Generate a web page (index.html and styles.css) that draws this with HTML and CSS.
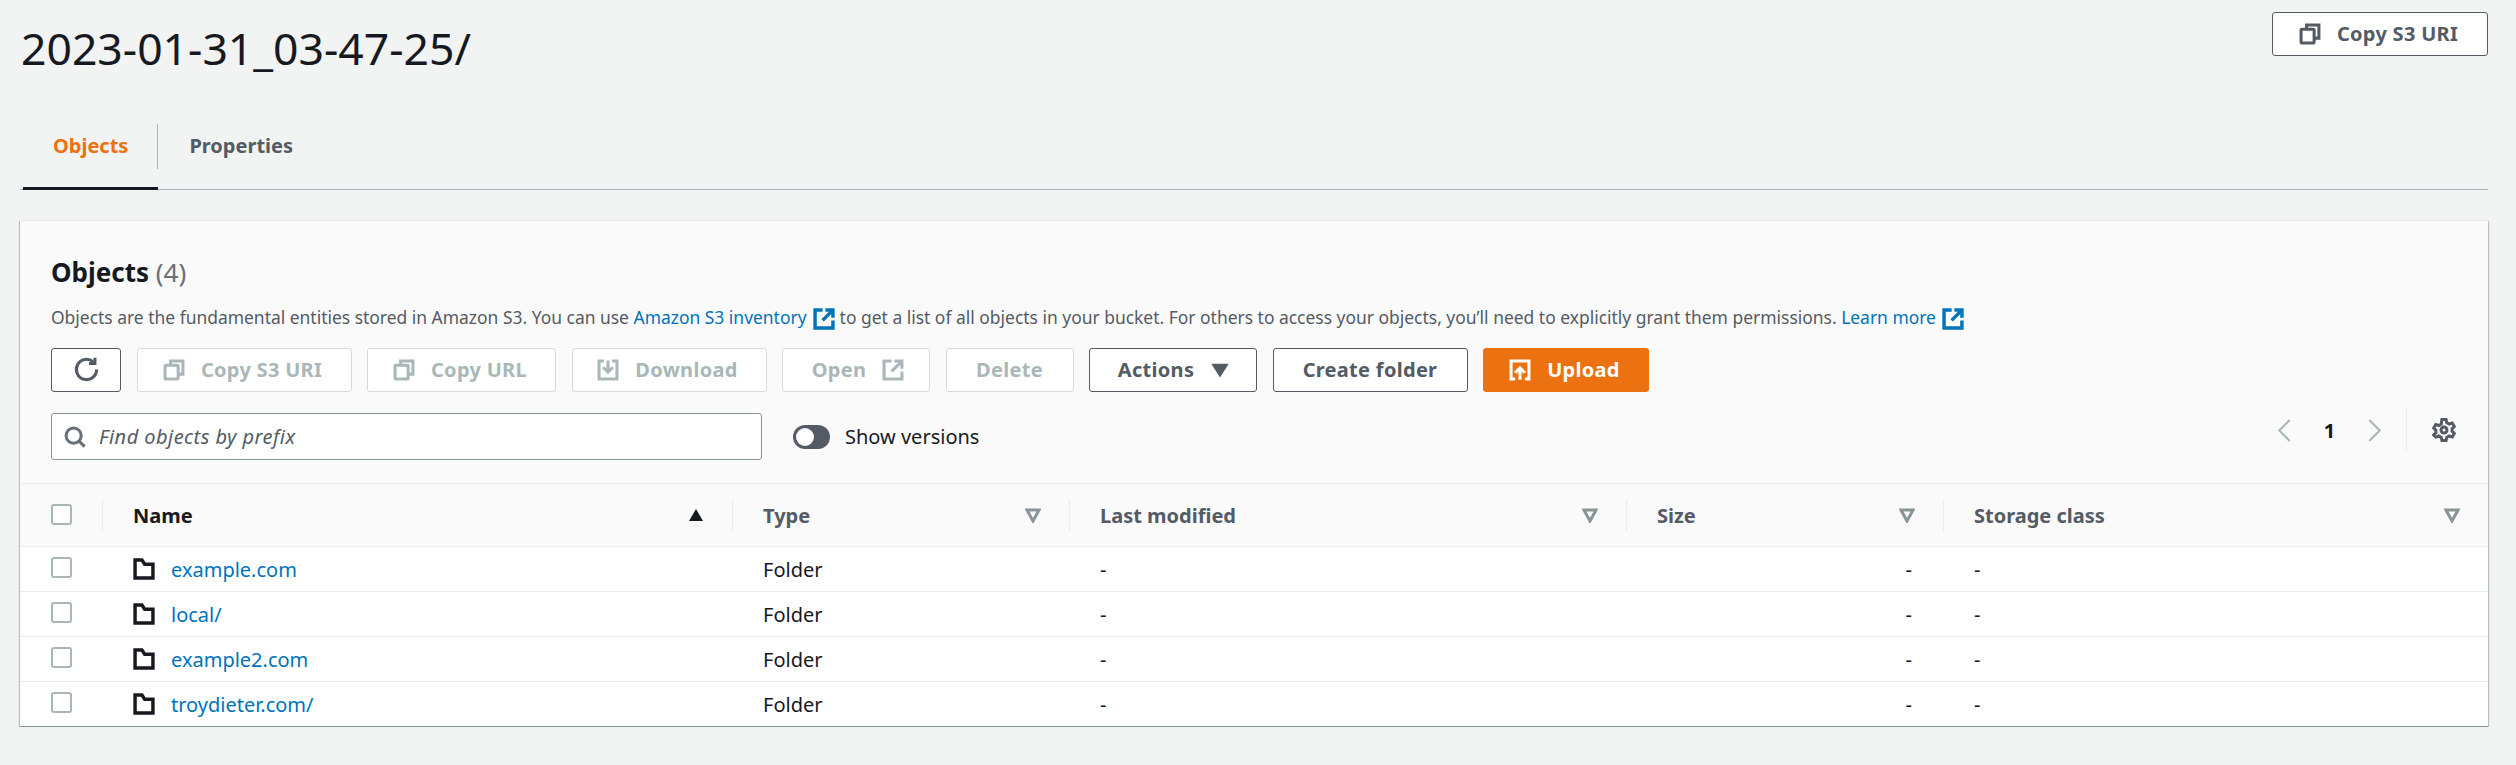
FILE: index.html
```html
<!DOCTYPE html>
<html lang="en">
<head>
    <meta charset="UTF-8">
    <title>2023-01-31_03-47-25/</title>
    <link rel="stylesheet" href="styles.css">
</head>
<body>
    <div class="page">
        <!-- Page title -->
        <div class="page-head">
            <h1>2023-01-31_03-47-25/</h1>
            <button class="btn btn-copy-top">
                <svg class="icon" viewBox="0 0 16 16"><path d="M5.500 4V1.500h9V11H11.500"/><rect x="1.500" y="4.500" width="9.500" height="10" rx=".5"/></svg>
                Copy S3 URI
            </button>
        </div>

        <!-- Tabs -->
        <div class="tabs">
            <div class="tab active"><span class="tab-label">Objects</span></div>
            <div class="tab"><span class="tab-label last">Properties</span></div>
        </div>

        <div class="panel">
            <div class="panel-head">
                <h2>Objects <span class="count">(4)</span></h2>
                <p class="desc">Objects are the fundamental entities stored in Amazon S3. You can use <a href="#">Amazon S3 inventory <svg class="ext" viewBox="0 0 16 16"><path d="M7 1.500H1.500v13h13V9"/><path d="M9 1.500h5.500V7M14.500 1.500L7 9"/></svg></a> to get a list of all objects in your bucket. For others to access your objects, you’ll need to explicitly grant them permissions. <a href="#">Learn more <svg class="ext" viewBox="0 0 16 16"><path d="M7 1.500H1.500v13h13V9"/><path d="M9 1.500h5.500V7M14.500 1.500L7 9"/></svg></a></p>

                <div class="toolbar">
                    <button class="btn btn-refresh">
                        <svg class="icon icon-refresh" viewBox="0 0 16 16"><path d="M14 8a6 6 0 1 1-2-4.500"/><path d="M13 1v3.500H9.500"/></svg>
                    </button>
                    <button class="btn disabled w-uri">
                        <svg class="icon" viewBox="0 0 16 16"><path d="M5.500 4V1.500h9V11H11.500"/><rect x="1.500" y="4.500" width="9.500" height="10" rx=".5"/></svg>
                        Copy S3 URI
                    </button>
                    <button class="btn disabled w-url">
                        <svg class="icon" viewBox="0 0 16 16"><path d="M5.500 4V1.500h9V11H11.500"/><rect x="1.500" y="4.500" width="9.500" height="10" rx=".5"/></svg>
                        Copy URL
                    </button>
                    <button class="btn disabled w-download">
                        <svg class="icon" viewBox="0 0 16 16"><path d="M5 1.500H1.500v13h13v-13H11"/><path d="M8 1v8.500M4.500 6L8 9.500 11.500 6"/></svg>
                        Download
                    </button>
                    <button class="btn disabled w-open">
                        Open
                        <svg class="icon" viewBox="0 0 16 16"><path d="M7 1.500H1.500v13h13V9"/><path d="M9 1.500h5.500V7M14.500 1.500L7 9"/></svg>
                    </button>
                    <button class="btn disabled w-delete">Delete</button>
                    <button class="btn w-actions">
                        Actions
                        <svg class="icon-caret" viewBox="0 0 16 16"><path d="M1 3h14L8 14z"/></svg>
                    </button>
                    <button class="btn w-create">Create folder</button>
                    <button class="btn primary w-upload">
                        <svg class="icon" viewBox="0 0 16 16"><path d="M4.500 14.500h-3v-13h13v13h-3"/><path d="M8 15V6.500M4.500 10L8 6.500l3.500 3.500"/></svg>
                        Upload
                    </button>
                </div>

                <div class="search-row">
                    <div class="search">
                        <svg class="icon search-icon" viewBox="0 0 16 16"><circle cx="7" cy="7" r="5.500"/><path d="M11 11l4 4"/></svg>
                        <span class="placeholder">Find objects by prefix</span>
                    </div>
                    <div class="toggle"><span class="knob"></span></div>
                    <span class="toggle-label">Show versions</span>

                    <div class="pagination">
                        <svg class="chevron" viewBox="0 0 14 22"><path d="M12 1L2 11l10 10"/></svg>
                        <span class="page-num">1</span>
                        <svg class="chevron" viewBox="0 0 14 22"><path d="M2 1l10 10L2 21"/></svg>
                        <span class="pag-divider"></span>
                        <svg class="icon gear" viewBox="0 0 16 16"><circle cx="8" cy="8" r="2"/><path d="M6.600 1h2.800l.4 2 1.700 1 2-.7 1.400 2.400-1.500 1.400v1.800l1.500 1.400-1.400 2.400-2-.7-1.700 1-.4 2H6.600l-.4-2-1.700-1-2 .7L1.100 11.300l1.500-1.400V8.100L1.100 6.700l1.400-2.400 2 .7 1.700-1z"/></svg>
                    </div>
                </div>
            </div>

            <table class="objects">
                <colgroup>
                    <col class="col-check">
                    <col class="col-name">
                    <col class="col-type">
                    <col class="col-modified">
                    <col class="col-size">
                    <col class="col-class">
                </colgroup>
                <thead>
                    <tr>
                        <th class="check-head"><span class="checkbox"></span></th>
                        <th><div class="th-inner sorted">Name <svg class="sort" viewBox="0 0 16 16"><path d="M8 2l7 12H1z"/></svg></div></th>
                        <th><div class="th-inner">Type <svg class="filter" viewBox="0 0 16 16"><path d="M2 3h12L8 14z"/></svg></div></th>
                        <th><div class="th-inner">Last modified <svg class="filter" viewBox="0 0 16 16"><path d="M2 3h12L8 14z"/></svg></div></th>
                        <th><div class="th-inner">Size <svg class="filter" viewBox="0 0 16 16"><path d="M2 3h12L8 14z"/></svg></div></th>
                        <th><div class="th-inner">Storage class <svg class="filter" viewBox="0 0 16 16"><path d="M2 3h12L8 14z"/></svg></div></th>
                    </tr>
                </thead>
                <tbody>
                    <tr>
                        <td class="check-cell"><span class="checkbox"></span></td>
                        <td><div class="name-cell"><svg class="folder" viewBox="0 0 16 16"><path d="M1.500 14.500v-13h5l2 3h6v10z"/></svg><a href="#">example.com</a></div></td>
                        <td>Folder</td>
                        <td>-</td>
                        <td class="size-cell">-</td>
                        <td>-</td>
                    </tr>
                    <tr>
                        <td class="check-cell"><span class="checkbox"></span></td>
                        <td><div class="name-cell"><svg class="folder" viewBox="0 0 16 16"><path d="M1.500 14.500v-13h5l2 3h6v10z"/></svg><a href="#">local/</a></div></td>
                        <td>Folder</td>
                        <td>-</td>
                        <td class="size-cell">-</td>
                        <td>-</td>
                    </tr>
                    <tr>
                        <td class="check-cell"><span class="checkbox"></span></td>
                        <td><div class="name-cell"><svg class="folder" viewBox="0 0 16 16"><path d="M1.500 14.500v-13h5l2 3h6v10z"/></svg><a href="#">example2.com</a></div></td>
                        <td>Folder</td>
                        <td>-</td>
                        <td class="size-cell">-</td>
                        <td>-</td>
                    </tr>
                    <tr>
                        <td class="check-cell"><span class="checkbox"></span></td>
                        <td><div class="name-cell"><svg class="folder" viewBox="0 0 16 16"><path d="M1.500 14.500v-13h5l2 3h6v10z"/></svg><a href="#">troydieter.com/</a></div></td>
                        <td>Folder</td>
                        <td>-</td>
                        <td class="size-cell">-</td>
                        <td>-</td>
                    </tr>
                </tbody>
            </table>
        </div>
    </div>
</body>
</html>
```

FILE: styles.css
```css
body {
    margin: 0;
    background-color: #f2f3f3;
    color: #16191f;
    font-family: "Noto Sans", sans-serif;
    font-size: 20px;
}

.page {
    padding: 12px 28px 0 20px;
}

/* Title row */
.page-head {
    display: flex;
    justify-content: space-between;
    align-items: flex-start;
    height: 100px;
}

h1 {
    margin: 12px 0 0 1px;
    font-size: 44.5px;
    font-weight: 400;
    line-height: 48px;
}

/* Tabs */
.tabs {
    display: flex;
    border-bottom: 1px solid #aab7b8;
    padding-left: 3px;
}

.tab {
    padding: 12px 0 21px;
    margin-bottom: -1px;
    font-weight: 700;
    color: #545b64;
}

.tab.active {
    padding-bottom: 18px;
    border-bottom: 3px solid #16191f;
    color: #ec7211;
}

.tab-label {
    display: flex;
    align-items: center;
    height: 43px;
    padding: 0 29px 2px 30px;
    border-right: 1px solid #aab7b8;
}

.tab-label.last {
    border-right: none;
    padding-left: 31px;
}

/* Panel */
.panel {
    margin-top: 30px;
    background-color: #fff;
    border-top: 1px solid #eaeded;
    border-bottom: 1px solid #879596;
    box-shadow: 0 1px 1px 0 rgba(0, 28, 36, 0.3), 1px 1px 1px 0 rgba(0, 28, 36, 0.2), -1px 1px 1px 0 rgba(0, 28, 36, 0.2);
}

.panel-head {
    background-color: #fafafa;
    padding: 35px 0 23px 31px;
}

h2 {
    margin: 0;
    font-size: 26px;
    font-weight: 700;
    line-height: 32px;
}

.count {
    font-weight: 400;
    color: #687078;
}

.desc {
    margin: 17px 0 0;
    font-size: 17.45px;
    line-height: 24px;
    color: #545b64;
}

a {
    color: #0073bb;
    text-decoration: none;
}

.ext {
    width: 22px;
    height: 22px;
    margin: 0 0 0 2px;
    vertical-align: -6px;
    fill: none;
    stroke: #0073bb;
    stroke-width: 2.500;
}

/* Buttons */
.toolbar {
    display: flex;
    gap: 15.500px;
    margin-top: 18px;
}

.btn {
    display: flex;
    align-items: center;
    justify-content: center;
    gap: 16px;
    height: 44px;
    padding: 0 0 1px;
    box-sizing: border-box;
    background-color: #fff;
    border: 1px solid #545b64;
    border-radius: 3px;
    color: #545b64;
    font-family: "Noto Sans", sans-serif;
    font-size: 20px;
    font-weight: 700;
    letter-spacing: 0.3px;
}

.btn.disabled {
    border-color: #d5dbdb;
    color: #aab7b8;
}

.btn.primary {
    background-color: #ec7211;
    border-color: #ec7211;
    color: #fff;
}

.btn-copy-top {
    width: 216px;
    padding-right: 3px;
}

.btn-refresh {
    width: 70px;
}

.w-uri { width: 215px; padding-right: 3px; }
.w-url { width: 189px; padding-right: 3px; }
.w-download { width: 195px; padding-right: 3px; }
.w-open { width: 148px; padding-left: 4px; }
.w-delete { width: 128px; }
.w-actions { width: 168px; padding-left: 2px; }
.w-create { width: 195px; }
.w-upload { width: 166px; padding-right: 3px; }

.icon {
    width: 22px;
    height: 22px;
    fill: none;
    stroke: currentColor;
    stroke-width: 2.200;
    flex-shrink: 0;
}

.icon-refresh {
    width: 27px;
    height: 27px;
    stroke-width: 1.800;
}

.icon-caret {
    width: 20px;
    height: 20px;
    fill: currentColor;
}

/* Search row */
.search-row {
    display: flex;
    align-items: center;
    margin-top: 21px;
    height: 47px;
}

.search {
    display: flex;
    align-items: center;
    width: 711px;
    height: 47px;
    box-sizing: border-box;
    background-color: #fff;
    border: 1px solid #879596;
    border-radius: 3px;
    padding-left: 12px;
}

.search-icon {
    color: #687078;
    margin-right: 13px;
}

.placeholder {
    font-style: italic;
    color: #545b64;
    letter-spacing: 0.45px;
}

.toggle {
    display: flex;
    align-items: center;
    width: 37px;
    height: 24px;
    margin-left: 31px;
    padding-left: 3px;
    box-sizing: border-box;
    background-color: #545b64;
    border-radius: 12px;
}

.knob {
    width: 18px;
    height: 18px;
    background-color: #fff;
    border-radius: 50%;
}

.toggle-label {
    margin-left: 15px;
}

.pagination {
    display: flex;
    align-items: center;
    height: 44px;
    margin: -13px 32px 0 auto;
}

.chevron {
    width: 15px;
    height: 23px;
    fill: none;
    stroke: #aab7b8;
    stroke-width: 2;
}

.page-num {
    width: 75px;
    text-align: center;
    font-weight: 700;
}

.pag-divider {
    width: 1px;
    height: 44px;
    margin: 0 25px 0 24px;
    background-color: #eaeded;
}

.gear {
    width: 24px;
    height: 24px;
    color: #545b64;
    stroke-width: 2;
}

/* Objects table */
.objects {
    width: 100%;
    border-collapse: collapse;
    table-layout: fixed;
}

.col-check { width: 82px; }
.col-name { width: 630px; }
.col-type { width: 337px; }
.col-modified { width: 557px; }
.col-size { width: 317px; }

th {
    height: 47px;
    padding: 0 0 15px;
    background-color: #fafafa;
    border-top: 1px solid #eaeded;
    text-align: left;
    font-weight: 700;
    color: #545b64;
    vertical-align: bottom;
}

th.check-head {
    height: 21px;
    padding: 20px 0 0 31px;
    vertical-align: top;
}

.th-inner {
    display: flex;
    align-items: center;
    justify-content: space-between;
    height: 32px;
    padding: 0 28px 0 30px;
    border-left: 1px solid #eaeded;
}

.th-inner.sorted {
    color: #16191f;
}

.sort {
    width: 16px;
    height: 16px;
    fill: #16191f;
}

.filter {
    width: 16px;
    height: 16px;
    fill: #fff;
    stroke: #879596;
    stroke-width: 3;
}

td {
    height: 44px;
    padding: 0 0 0 31px;
    background-color: #fff;
    border-top: 1px solid #eaeded;
    vertical-align: middle;
}

td.size-cell {
    padding-right: 31px;
    text-align: right;
}

td.check-cell {
    height: 34px;
    padding-top: 10px;
    vertical-align: top;
}

.checkbox {
    display: block;
    width: 21px;
    height: 21px;
    box-sizing: border-box;
    background-color: #fff;
    border: 2px solid #aab7b8;
    border-radius: 3px;
}

.name-cell {
    display: flex;
    align-items: center;
    gap: 16px;
}

.folder {
    width: 22px;
    height: 22px;
    fill: none;
    stroke: #16191f;
    stroke-width: 2.500;
}
```
